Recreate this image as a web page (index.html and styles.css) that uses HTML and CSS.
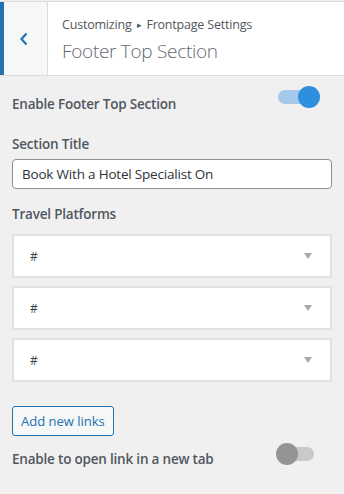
FILE: index.html
```html
<!DOCTYPE html>
<html lang="en">
<head>
    <meta charset="UTF-8">
    <meta name="viewport" content="width=device-width, initial-scale=1.0">
    <title>Footer Top Section</title>
    <link rel="stylesheet" href="styles.css">
</head>
<body>
    <div class="panel-header">
        <button class="back-btn" aria-label="Back">
            <svg width="10" height="14" viewBox="0 0 10 14"><path d="M7.5 1.5 L2.5 7 L7.5 12.5" fill="none" stroke="#2271b1" stroke-width="2.2"/></svg>
        </button>
        <div class="header-title">
            <div class="crumbs">Customizing <span class="sep">&#9656;</span> Frontpage Settings</div>
            <div class="section-name">Footer Top Section</div>
        </div>
    </div>

    <div class="panel-body">
        <div class="toggle-row first">
            <span class="field-label">Enable Footer Top Section</span>
            <span class="toggle on"><span class="knob"></span></span>
        </div>

        <div class="form-group">
            <label class="field-label" for="title">Section Title</label>
            <input type="text" id="title" value="Book With a Hotel Specialist On">
        </div>

        <div class="form-group platforms">
            <div class="field-label">Travel Platforms</div>
            <div class="repeater">
                <div class="repeater-item"><span>#</span><span class="caret"></span></div>
                <div class="repeater-item"><span>#</span><span class="caret"></span></div>
                <div class="repeater-item"><span>#</span><span class="caret"></span></div>
            </div>
            <button class="add-btn">Add new links</button>
        </div>

        <div class="toggle-row last">
            <span class="field-label">Enable to open link in a new tab</span>
            <span class="toggle"><span class="knob"></span></span>
        </div>
    </div>
</body>
</html>
```

FILE: styles.css
```css
body {
    margin: 0;
    font-family: "Open Sans", "Noto Sans", sans-serif;
    font-size: 13px;
    color: #50575e;
    background-color: #f0f0f1;
}
.panel-header {
    display: flex;
    height: 73px;
    margin-top: 1px;
    background: white;
    border-top: 1px solid #dcdcde;
    border-bottom: 1px solid #dcdcde;
}
.back-btn {
    box-sizing: border-box;
    width: 48px;
    padding: 0 4px 0 0;
    background: #f6f7f7;
    border: none;
    border-left: 4px solid #2271b1;
    border-right: 1px solid #dcdcde;
    display: flex;
    align-items: center;
    justify-content: center;
}
.header-title {
    padding: 13px 0 0 14px;
}
.crumbs {
    font-size: 12.5px;
    line-height: 20px;
    letter-spacing: -0.2px;
}
.crumbs .sep {
    font-size: 9px;
    position: relative;
    top: -1px;
    margin: 0 2px;
}
.section-name {
    font-size: 19px;
    font-weight: 300;
    line-height: 30px;
    color: #646970;
    letter-spacing: -0.3px;
}
.panel-body {
    padding: 0 12px;
}
.field-label {
    display: block;
    font-size: 13.5px;
    font-weight: 600;
    letter-spacing: -0.2px;
    color: #50575e;
}
.toggle-row {
    display: flex;
    align-items: center;
    justify-content: space-between;
}
.toggle-row.first {
    margin-top: 14px;
    height: 24px;
}
.toggle-row.first .field-label {
    margin-top: 4px;
}
.form-group {
    margin-top: 21px;
}
.form-group label {
    margin-bottom: 6px;
}
.form-group.platforms {
    margin-top: 16px;
}
input[type="text"] {
    box-sizing: border-box;
    width: 100%;
    height: 30px;
    padding: 0 9px;
    font-family: inherit;
    font-size: 13.5px;
    letter-spacing: -0.2px;
    color: #2c3338;
    border: 1px solid #8c8f94;
    border-radius: 4px;
    background: white;
}
.repeater {
    margin-top: 11px;
    display: flex;
    flex-direction: column;
    gap: 8px;
}
.repeater-item {
    display: flex;
    align-items: center;
    justify-content: space-between;
    height: 44px;
    box-sizing: border-box;
    padding: 0 18px 0 16px;
    background: white;
    border: 2px solid #e2e2e4;
    font-size: 12px;
    color: #3c434a;
}
.caret {
    width: 0;
    height: 0;
    border-left: 4px solid transparent;
    border-right: 4px solid transparent;
    border-top: 6px solid #a7aaad;
}
.add-btn {
    margin-top: 24px;
    height: 30px;
    padding: 0 8px;
    font-family: inherit;
    font-size: 13px;
    color: #2271b1;
    background: #f6f7f7;
    border: 1px solid #2271b1;
    border-radius: 3px;
}
.toggle-row.last {
    margin-top: 7px;
}
.toggle {
    position: relative;
    width: 44px;
    height: 22px;
    margin-right: 12px;
    margin-bottom: 10px;
}
.toggle::before {
    content: "";
    position: absolute;
    top: 4px;
    left: 8px;
    width: 30px;
    height: 14px;
    border-radius: 7px;
    background: #c9c9cb;
}
.toggle .knob {
    position: absolute;
    top: 0;
    left: 0;
    width: 22px;
    height: 22px;
    border-radius: 50%;
    background: #949494;
}
.toggle.on::before {
    left: 2px;
    width: 32px;
    background: #a6c9eb;
}
.toggle.on .knob {
    left: auto;
    right: 0;
    background: #2e8fdf;
}
```
